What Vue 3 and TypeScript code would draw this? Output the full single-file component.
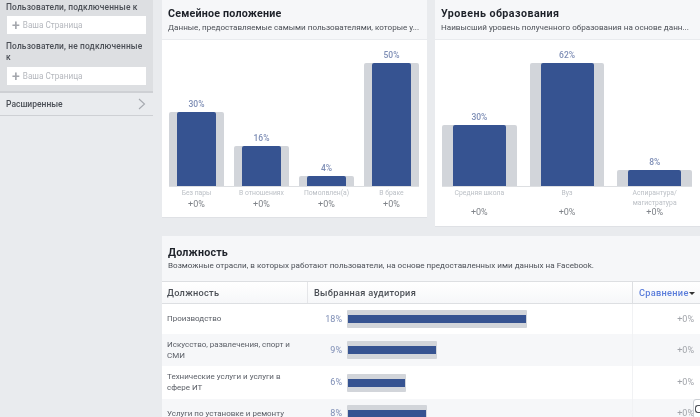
<script setup lang="ts">
interface Bar { pct: string; h: number; label: string }
const family: Bar[] = [
  { pct: '30%', h: 74, label: 'Без пары' },
  { pct: '16%', h: 40, label: 'В отношениях' },
  { pct: '4%', h: 10, label: 'Помолвлен(а)' },
  { pct: '50%', h: 123, label: 'В браке' },
]
const edu: Bar[] = [
  { pct: '30%', h: 61, label: 'Средняя школа' },
  { pct: '62%', h: 123, label: 'Вуз' },
  { pct: '8%', h: 16, label: 'Аспирантура/ магистратура' },
]
const rows = [
  { name: 'Производство', pct: 18, h: 30, alt: false },
  { name: 'Искусство, развлечения, спорт и СМИ', pct: 9, h: 32, alt: true },
  { name: 'Технические услуги и услуги в сфере ИТ', pct: 6, h: 33, alt: false },
  { name: 'Услуги по установке и ремонту', pct: 8, h: 29, alt: true },
]
</script>

<template>
  <div class="page">
    <aside class="side">
      <div class="filters">
        <div class="flabel">Пользователи, подключенные к</div>
        <div class="finput"><span class="plus">+</span>Ваша Страница</div>
        <div class="flabel second">Пользователи, не подключенные к</div>
        <div class="finput"><span class="plus">+</span>Ваша Страница</div>
      </div>
      <div class="adv">
        <span>Расширенные</span>
        <svg width="8" height="12" viewBox="0 0 8 12"><path d="M1 1l5.5 5L1 11" fill="none" stroke="#a6a9af" stroke-width="1.1"/></svg>
      </div>
    </aside>
    <main class="main">
      <div class="top">
        <section class="card fam">
          <header class="head">
            <h2>Семейное положение</h2>
            <p>Данные, предоставляемые самыми пользователями, которые у...</p>
          </header>
          <div class="chart">
            <div v-for="b in family" :key="b.label" class="col">
              <span class="pct">{{ b.pct }}</span>
              <div class="track" :style="{ height: b.h + 'px' }"><div class="fill"></div></div>
            </div>
          </div>
          <div class="labels">
            <div v-for="b in family" :key="b.label" class="lab">
              <span class="name">{{ b.label }}</span>
              <span class="delta">+0%</span>
            </div>
          </div>
        </section>
        <section class="card edu">
          <header class="head">
            <h2>Уровень образования</h2>
            <p>Наивысший уровень полученного образования на основе данн...</p>
          </header>
          <div class="chart">
            <div v-for="b in edu" :key="b.label" class="col">
              <span class="pct">{{ b.pct }}</span>
              <div class="track" :style="{ height: b.h + 'px' }"><div class="fill"></div></div>
            </div>
          </div>
          <div class="labels">
            <div v-for="b in edu" :key="b.label" class="lab">
              <span class="name">{{ b.label }}</span>
              <span class="delta">+0%</span>
            </div>
          </div>
        </section>
      </div>
      <section class="card table">
        <header class="thead-title">
          <h2>Должность</h2>
          <p>Возможные отрасли, в которых работают пользователи, на основе предоставленных ими данных на Facebook.</p>
        </header>
        <div class="row th">
          <div class="c1">Должность</div>
          <div class="c2">Выбранная аудитория</div>
          <div class="c3"><span class="link">Сравнение</span><i class="caret"></i></div>
        </div>
        <div v-for="r in rows" :key="r.name" class="row" :class="{ alt: r.alt }" :style="{ height: r.h + 'px' }">
          <div class="c1"><span class="rname">{{ r.name }}</span></div>
          <div class="c2">
            <span class="rpct">{{ r.pct }}%</span>
            <div class="hbar" :style="{ width: r.pct * 10 - (r.pct === 6 ? 1 : 0) + 'px' }"><div class="hfill"></div></div>
          </div>
          <div class="c3 rdelta">+0%</div>
        </div>
      </section>
      <div class="float"></div>
    </main>
  </div>
</template>

<style>
html, body { margin: 0; background: #e9ebee; }
</style>

<style scoped>
.page {
  display: flex;
  width: 700px;
  height: 417px;
  overflow: hidden;
  background: #e9ebee;
  font-family: Roboto, "Liberation Sans", sans-serif;
  color: #4b4f56;
  filter: blur(0.3px);
}
.side { width: 153px; flex: none; }
.filters {
  background: #dddfe2;
  padding: 2px 7px 0 7px;
  border-bottom: 2px solid #ced0d4;
  height: 89px;
}
.flabel { font-size: 8.4px; font-weight: 500; line-height: 11px; color: #4b4f56; height: 13px; margin-left: -1px; letter-spacing: 0.15px; white-space: nowrap; }
.flabel.second { height: auto; margin-top: 7px; margin-bottom: 4px; width: 140px; white-space: normal; }
.finput {
  background: #fff;
  height: 18px;
  line-height: 18px;
  font-size: 8.2px;
  color: #b4b7bd;
  display: flex;
  align-items: center;
  padding-left: 5px;
  margin-top: 1px;
}
.plus { font-size: 14px; font-weight: 500; color: #a3a6ac; margin-right: 3px; }
.adv {
  height: 22px;
  display: flex;
  align-items: center;
  justify-content: space-between;
  padding: 0 7px 0 6px;
  font-size: 8.5px;
  font-weight: 500;
  color: #4b4f56;
  border-bottom: 1px solid #ced0d4;
}
.main { position: relative; flex: 1; padding-left: 9px; min-width: 0; }
.top { display: flex; gap: 8px; align-items: flex-start; }
.card { background: #fff; border-bottom: 1px solid #dfe1e5; }
.fam { width: 265px; height: 217px; }
.edu { width: 265px; height: 226px; }
.head {
  height: 40px;
  background: #f6f7f9;
  border-bottom: 1px solid #e9ebee;
  padding: 7px 7px 0 6px;
  box-sizing: border-box;
}
h2 { margin: 0; font-size: 10.7px; font-weight: 700; line-height: 14px; color: #1d2129; letter-spacing: 0.2px; }
.edu h2 { letter-spacing: 0.45px; }
.head p, .thead-title p { margin: 0; font-size: 8.1px; line-height: 13px; color: #4b4f56; white-space: nowrap; }
.chart {
  display: flex;
  align-items: flex-end;
  height: 146px;
  margin: 0 8px 0 7px;
  gap: 10px;
  border-bottom: 1px solid #dddfe2;
}
.edu .chart { gap: 13px; }
.col { flex: 1; display: flex; flex-direction: column; align-items: stretch; }
.pct { text-align: center; font-size: 8.5px; font-weight: 500; color: #7d8db5; line-height: 11px; margin-bottom: 2px; }
.track { background: #d2d5da; border-radius: 2px 2px 0 0; display: flex; justify-content: center; }
.fill { width: 71%; background: #365391; border-radius: 2px 2px 0 0; }
.labels { display: flex; gap: 10px; margin: 0 8px 0 7px; }
.edu .labels { gap: 13px; }
.lab { flex: 1; display: flex; flex-direction: column; align-items: center; text-align: center; padding-top: 2px; }
.name { font-size: 6.8px; line-height: 9.5px; color: #bcc0c6; white-space: nowrap; }
.delta { font-size: 9px; line-height: 11px; color: #7f8389; }
.edu .name { height: 19px; white-space: normal; width: 60px; }
.edu .delta { margin-top: -1px; }
.table { margin-top: 9px; border-bottom: 0; }
.thead-title { height: 46px; background: #f6f7f9; padding: 10px 7px 0 6px; box-sizing: border-box; border-bottom: 1px solid #dddfe2; white-space: nowrap; }
.thead-title p { margin-top: -1px; }
.row { display: grid; grid-template-columns: 145px 326px 67px; }
.th { height: 22px; background: linear-gradient(#fff, #f6f7f9); border-bottom: 1px solid #dddfe2; font-size: 9.2px; font-weight: 500; color: #4b4f56; box-sizing: border-box; letter-spacing: 0.3px; }
.th .c1, .th .c2, .th .c3 { display: flex; align-items: center; }
.th .c2 { padding-left: 6px; border-left: 1px solid #e5e6e9; border-right: 1px solid #dddfe2; box-sizing: border-box; }
.th .c1 { padding-left: 5px; }
.th .c3 { padding-left: 6px; white-space: nowrap; }
.link { color: #5b7ddb; }
.caret { border: 3px solid transparent; border-top: 3px solid #333; border-bottom: 0; margin-top: 2px; }
.alt { background: #f6f7f9; }
.row:not(.th) .c1 { display: flex; align-items: center; padding: 0 12px 1px 5px; font-size: 8px; line-height: 11px; color: #5a5e66; }
.rname { display: block; }
.row:not(.th) .c2 { display: flex; align-items: center; border-right: 1px solid #f1f2f4; box-sizing: border-box; }
.rpct { width: 35px; text-align: right; font-size: 9px; line-height: 10px; padding-bottom: 1px; color: #7d8db5; margin-right: 5px; flex: none; }
.hbar { height: 18px; background: #d2d5da; display: flex; align-items: center; border-radius: 1px; }
.hfill { height: 8px; width: 100%; margin: 0 1px; background: #365391; }
.rdelta { display: flex; align-items: center; justify-content: flex-end; padding: 0 6px 1px 0; font-size: 9px; color: #a1a4aa; }
.float {
  position: absolute;
  left: 540px;
  top: 399px;
  width: 14px;
  height: 20px;
  background: #fff;
  border: 1px solid #ccd0d5;
  border-radius: 3px 0 0 3px;
  box-sizing: border-box;
}
.float::after {
  content: "";
  position: absolute;
  left: 1px;
  top: 5px;
  width: 5px;
  height: 6px;
  border: 1px solid #4b4f56;
  border-right: 0;
  border-radius: 3px 0 0 3px;
}
</style>
